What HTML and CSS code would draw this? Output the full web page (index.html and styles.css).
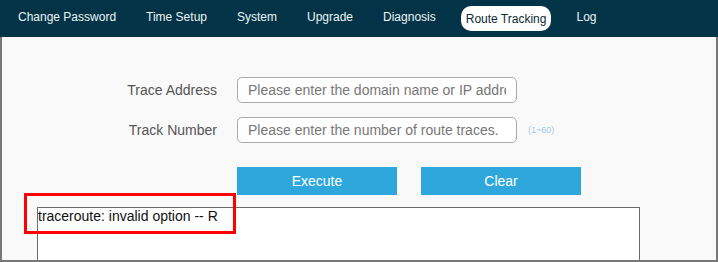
FILE: index.html
```html
<!DOCTYPE html>
<html lang="en">
<head>
  <meta charset="UTF-8">
  <title>Route Tracking</title>
  <link rel="stylesheet" href="styles.css">
</head>
<body>
  <!-- top menu -->
  <nav class="menu">
    <a href="#">Change Password</a>
    <a href="#">Time Setup</a>
    <a href="#">System</a>
    <a href="#">Upgrade</a>
    <a href="#">Diagnosis</a>
    <a href="#" class="active">Route Tracking</a>
    <a href="#">Log</a>
  </nav>

  <div class="page">
    <form class="trace-form">
      <div class="row">
        <label>Trace Address</label>
        <input type="text" placeholder="Please enter the domain name or IP address">
      </div>
      <div class="row">
        <label>Track Number</label>
        <input type="text" placeholder="Please enter the number of route traces.">
        <span class="hint">(1~60)</span>
      </div>
      <div class="buttons">
        <button type="button" class="btn">Execute</button>
        <button type="button" class="btn">Clear</button>
      </div>
    </form>

    <div class="result">
      <textarea readonly>traceroute: invalid option -- R</textarea>
      <div class="mark"></div>
    </div>
  </div>
</body>
</html>
```

FILE: styles.css
```css
/* base */
body {
  margin: 0;
  padding: 0;
  width: 718px;
  font-family: "Liberation Sans", Arial, sans-serif;
  background-color: #ffffff;
  overflow: hidden;
}

/* menu */
.menu {
  display: flex;
  align-items: flex-start;
  height: 37px;
  padding: 0 3px;
  background-color: #023346;
  box-sizing: border-box;
}

.menu a {
  padding: 10px 15px 0;
  font-size: 12px;
  line-height: 14px;
  color: #eef3f5;
  text-decoration: none;
  white-space: nowrap;
}

.menu a.active {
  margin: 6px 10px 0;
  padding: 1px 5px 0;
  height: 25px;
  box-sizing: border-box;
  line-height: 24px;
  background-color: #ffffff;
  border-radius: 10px;
  color: #0b2a38;
}

/* page frame */
.page {
  height: 225px;
  box-sizing: border-box;
  border: 2px solid #777777;
  border-top: none;
  background-color: #f9f9f9;
  overflow: hidden;
  padding-top: 40px;
}

.row {
  display: flex;
  align-items: center;
  margin-bottom: 14px;
}

.row label {
  width: 215px;
  margin-right: 20px;
  text-align: right;
  font-size: 14px;
  color: #555555;
}

.row input {
  width: 280px;
  height: 26px;
  box-sizing: border-box;
  padding: 0 10px;
  border: 1px solid #aaaaaa;
  border-radius: 5px;
  background-color: #ffffff;
  font-family: "Liberation Sans", Arial, sans-serif;
  font-size: 14px;
  outline: none;
}

.row input::placeholder {
  color: #777777;
}

.hint {
  margin-left: 11px;
  font-size: 9px;
  color: #a3cbe3;
}

.buttons {
  display: flex;
  gap: 24px;
  margin: 24px 0 0 235px;
}

.btn {
  width: 160px;
  height: 28px;
  border: none;
  background-color: #2ea8dc;
  color: #ffffff;
  font-family: "Liberation Sans", Arial, sans-serif;
  font-size: 14px;
  cursor: pointer;
}

/* result box */
.result {
  position: relative;
  margin: 12px 0 0 35px;
}

.result textarea {
  display: block;
  width: 603px;
  height: 90px;
  box-sizing: border-box;
  margin: 0;
  padding: 0;
  border: 1px solid #6b6b6b;
  background-color: #ffffff;
  font-family: "Liberation Sans", Arial, sans-serif;
  font-size: 14px;
  color: #111111;
  resize: none;
  outline: none;
}

.mark {
  position: absolute;
  left: -13px;
  top: -14px;
  width: 212px;
  height: 41px;
  box-sizing: border-box;
  border: 3px solid #ff0000;
}
```
